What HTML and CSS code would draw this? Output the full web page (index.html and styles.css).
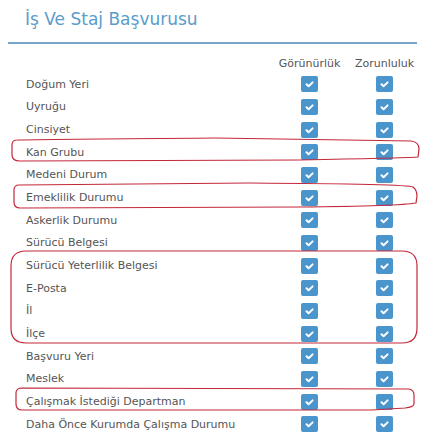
FILE: index.html
```html
<!DOCTYPE html>
<html>
  <head>
    <title>İş Ve Staj Başvurusu</title>
    <meta charset="UTF-8">
    <link rel="stylesheet" href="styles.css">
  </head>
  <body>
    <div class="page">
      <header class="head">
        <h1>İş Ve Staj Başvurusu</h1>
      </header>
      <div class="fields">
        <div class="row toprow">
          <span></span>
          <span class="colname">Görünürlük</span>
          <span class="colname">Zorunluluk</span>
        </div>
      </div>
      <svg class="marks" width="430" height="448" viewBox="0 0 430 448">
        <path d="M17 140 Q60 139 215 138 L411 141 Q419 142 419 149 L418 157 Q400 158 300 160 L20 161 Q12 161 12 155 L12 145 Q12 140 17 140 Z"/>
        <path d="M19 185 L250 183 Q408 184 413 187 Q417 190 417 196 L416 203 Q400 206 300 207 L20 208 Q14 208 14 202 L14 190 Q14 185 19 185 Z"/>
        <path d="M26 251 L402 251 Q417 251 417 266 L417 328 Q417 343 402 343 L26 343 Q11 343 11 328 L11 266 Q11 251 26 251 Z"/>
        <path d="M22 388 L409 389 Q414 390 414 395 L414 404 Q414 407 405 408 L372 410 L22 410 Q16 410 16 404 L16 393 Q16 388 22 388 Z"/>
      </svg>
    </div>

    <script>
var labels=['Doğum Yeri','Uyruğu','Cinsiyet','Kan Grubu','Medeni Durum','Emeklilik Durumu','Askerlik Durumu','Sürücü Belgesi','Sürücü Yeterlilik Belgesi','E-Posta','İl','İlçe','Başvuru Yeri','Meslek','Çalışmak İstediği Departman','Daha Önce Kurumda Çalışma Durumu'];
var box='<span class="cell"><span class="check"><svg width="17" height="16" viewBox="0 0 17 16"><path d="M5.5 8.3 L7.6 10.3 L11.6 6.4"/></svg></span></span>';
var html='';
labels.forEach(l=>{
  html+='<div class="row"><span class="label">'+l+'</span>'+box+box+'</div>';
});
document.querySelector('.fields').insertAdjacentHTML('beforeend',html);
    </script>
  </body>
</html>
```
FILE: styles.css
```css
html {
  background: white;
}
body {
  margin: 0;
  font-family: "DejaVu Sans", Verdana, sans-serif;
  color: #555;
}
.page {
  position: relative;
  width: 430px;
  height: 448px;
  overflow: hidden;
}
.head {
  margin: 0 13px 0 8px;
  padding: 7px 0 11px 17px;
  border-bottom: 2px solid #76a6ca;
}
.head h1 {
  margin: 0;
  font-size: 17px;
  line-height: 24px;
  font-weight: normal;
  color: #5b9ccb;
}
.fields {
  padding: 9px 8px 0 26px;
}
.row {
  display: grid;
  grid-template-columns: 1fr 75px 75px;
  align-items: center;
  height: 22.67px;
  font-size: 11px;
}
.toprow {
  height: 20px;
}
.colname {
  text-align: center;
}
.label {
  white-space: nowrap;
}
.cell {
  display: flex;
  justify-content: center;
}
.check {
  display: block;
  width: 17px;
  height: 16px;
  border-radius: 2px;
  background: #4a95cc;
}
.check svg {
  display: block;
}
.check path {
  fill: none;
  stroke: white;
  stroke-width: 2;
  stroke-linecap: round;
  stroke-linejoin: round;
}
.marks {
  position: absolute;
  top: 0;
  left: 0;
  pointer-events: none;
}
.marks path {
  fill: none;
  stroke: #c3283b;
  stroke-width: 1.2;
}
```
